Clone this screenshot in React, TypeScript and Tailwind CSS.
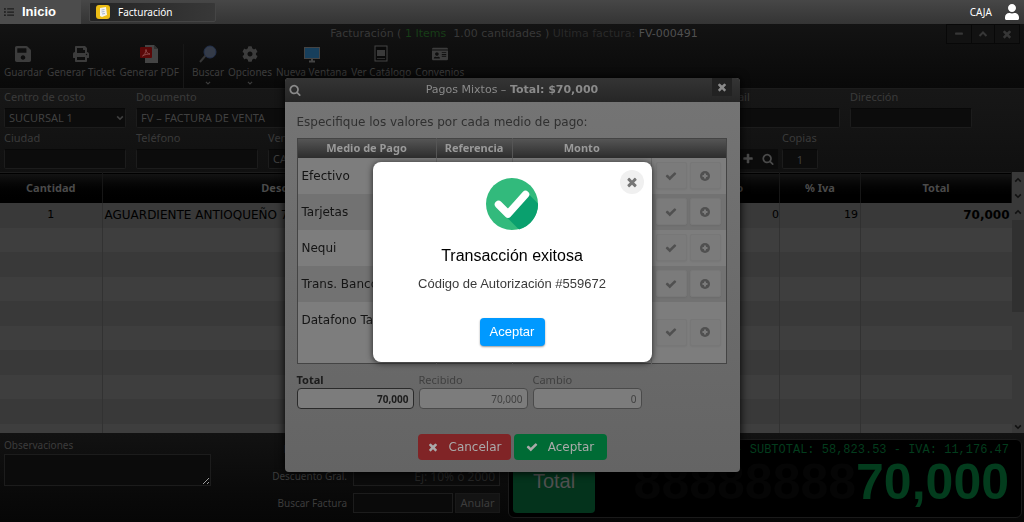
import type { ReactNode } from 'react'
import { FaCog, FaIdCard, FaListUl, FaPrint, FaSave, FaUser } from 'react-icons/fa'

const paths = {
  times:
    'M1490 1322q0 40-28 68l-136 136q-28 28-68 28t-68-28l-294-294-294 294q-28 28-68 28t-68-28l-136-136q-28-28-28-68t28-68l294-294-294-294q-28-28-28-68t28-68l136-136q28-28 68-28t68 28l294 294 294-294q28-28 68-28t68 28l136 136q28 28 28 68t-28 68l-294 294 294 294q28 28 28 68z',
  check:
    'M1671 566q0 40-28 68l-724 724-136 136q-28 28-68 28t-68-28l-136-136-362-362q-28-28-28-68t28-68l136-136q28-28 68-28t68 28l294 295 656-657q28-28 68-28t68 28l136 136q28 28 28 68z',
  plus:
    'M1600 736v192q0 40-28 68t-68 28h-416v416q0 40-28 68t-68 28h-192q-40 0-68-28t-28-68v-416h-416q-40 0-68-28t-28-68v-192q0-40 28-68t68-28h416v-416q0-40 28-68t68-28h192q40 0 68 28t28 68v416h416q40 0 68 28t28 68z',
  minus:
    'M1600 736v192q0 40-28 68t-68 28h-1216q-40 0-68-28t-28-68v-192q0-40 28-68t68-28h1216q40 0 68 28t28 68z',
  search:
    'M1216 832q0-185-131.5-316.5t-316.5-131.5-316.5 131.5-131.5 316.5 131.5 316.5 316.5 131.5 316.5-131.5 131.5-316.5zm512 832q0 52-38 90t-90 38q-54 0-90-38l-343-342q-179 124-399 124-143 0-273.5-55.5t-225-150-150-225-55.5-273.5 55.5-273.5 150-225 225-150 273.5-55.5 273.5 55.5 225 150 150 225 55.5 273.5q0 220-124 399l343 343q37 37 37 90z',
}

function Icon({ name, className }: { name: keyof typeof paths; className: string }) {
  return (
    <svg className={className} viewBox="0 0 1792 1792" fill="currentColor" aria-hidden="true">
      <path d={paths[name]} />
    </svg>
  )
}

function Chevron({ up = false, className }: { up?: boolean; className: string }) {
  return (
    <svg className={className} viewBox="0 0 10 10" fill="none" stroke="currentColor" strokeWidth={2} aria-hidden="true">
      <path d={up ? 'M1.5 7L5 3.5L8.5 7' : 'M1.5 3L5 6.5L8.5 3'} />
    </svg>
  )
}

function PdfIcon() {
  return (
    <svg className="w-5 h-5" viewBox="0 0 20 20" aria-hidden="true">
      <path d="M6 1h9l4 4v14H6z" fill="#444" />
      <path d="M15 1l4 4h-4z" fill="#303030" />
      <rect x="1" y="3" width="12" height="11" rx="1" fill="#5a0808" />
      <path d="M3.5 12c2-1 3.500-4 3.500-6.500 0 2.500 2 4.500 4 4.500-2.500 0-5 .5-7.500 2z" fill="none" stroke="#8d4a4a" />
    </svg>
  )
}

function LensIcon() {
  return (
    <svg className="w-5 h-5" viewBox="0 0 20 20" aria-hidden="true">
      <path d="M2 18l6-7" stroke="#363636" strokeWidth="2" />
      <circle cx="12" cy="8" r="6" fill="#343b48" stroke="#24314c" />
    </svg>
  )
}

function ScreenIcon() {
  return (
    <svg className="w-5 h-5" viewBox="0 0 20 20" aria-hidden="true">
      <rect x="2.500" y="3.500" width="15" height="11" fill="#173f5c" stroke="#444" />
      <path d="M7 17.500h6M10 15v2" stroke="#444" strokeWidth="2" />
    </svg>
  )
}

function CatalogIcon() {
  return (
    <svg className="w-5 h-5" viewBox="0 0 20 20" aria-hidden="true">
      <rect x="4" y="2" width="12" height="15" fill="#0a0a0a" stroke="#444" />
      <rect x="6" y="6" width="8" height="6" fill="#3a3a3a" />
      <path d="M6 14.500h8" stroke="#2c2c2c" />
    </svg>
  )
}

const tools: { label: string; icon: ReactNode; menu?: boolean; divider?: boolean }[] = [
  { label: 'Guardar', icon: <FaSave className="w-4 h-5" /> },
  { label: 'Generar Ticket', icon: <FaPrint className="w-4 h-5" /> },
  { label: 'Generar PDF', icon: <PdfIcon />, divider: true },
  { label: 'Buscar', icon: <LensIcon />, menu: true },
  { label: 'Opciones', icon: <FaCog className="w-4 h-5" />, menu: true },
  { label: 'Nueva Ventana', icon: <ScreenIcon /> },
  { label: 'Ver Catálogo', icon: <CatalogIcon /> },
  { label: 'Convenios', icon: <FaIdCard className="w-4 h-5" /> },
]

const methods = ['Efectivo', 'Tarjetas', 'Nequi', 'Trans. Bancolombia', 'Datafono Tarjeta']

const fieldLabel = 'block h-[19px] text-[11px] leading-4 text-[#3a3a3a]'
const fieldBox =
  'block h-5 w-full rounded-xs border border-[#1c1c1c] border-t-[#080808] bg-[#0c0c0c] px-1 text-[11px] text-[#404040]'

function Field({ id, label, value = '', options = false, className }: {
  id: string
  label: string
  value?: string
  options?: boolean
  className: string
}) {
  return (
    <div className={className}>
      <label htmlFor={id} className={fieldLabel}>
        {label}
      </label>
      {options ? (
        <div className="relative">
          <select id={id} className={`${fieldBox} appearance-none`}>
            <option>{value}</option>
          </select>
          <Chevron className="pointer-events-none absolute right-0.5 top-1.5 h-2 w-2 text-[#404040]" />
        </div>
      ) : (
        <input id={id} defaultValue={value} className={fieldBox} />
      )}
    </div>
  )
}

function TopBar() {
  return (
    <header className="flex h-6 items-center bg-linear-to-b from-[#474747] to-[#343434] text-white">
      <button className="flex h-full w-[81px] items-center gap-2 bg-[#4c4c4c] pl-1 font-['Liberation_Sans',sans-serif] text-[13px] font-bold">
        <FaListUl className="h-2.5 w-2.5 text-[#1c1c1c]" />
        Inicio
      </button>
      <button className="ml-2 flex h-5 w-[127px] items-center gap-2 rounded-xs border border-[#454545] bg-linear-to-r from-[#242424] to-[#383838] pl-1.5 text-[10px]">
        <svg className="h-3.5 w-3.5" viewBox="0 0 14 14" aria-hidden="true">
          <rect width="14" height="14" rx="3" fill="#edbe16" />
          <path d="M4 3l6-1 1 8-5 2-2-1z" fill="#f5f5ef" />
          <path d="M5.500 5l3-.5M5.500 7l3-.5M6 9l3-.5" stroke="#a8b6cf" />
        </svg>
        Facturación
      </button>
      <span className="ml-auto text-[10px]">CAJA</span>
      <FaUser className="ml-3 mr-1 h-4 w-4" />
    </header>
  )
}

function Toolbar() {
  return (
    <section className="bg-linear-to-b from-[#131313] to-[#090909]">
      <div className="flex h-5 items-start">
        <h1 className="flex-1 font-['DejaVu_Sans',sans-serif] pl-1 text-center text-[11px] leading-5 whitespace-pre text-[#383838]">
          Facturación ( <span className="text-[#173d17]">1 Items</span>  1.00 cantidades ) <span className="text-[#292929]">Ultima factura:</span> <span className="text-[#505050]">FV-000491</span>
        </h1>
        <div className="absolute right-1 flex border border-[#080808] bg-[#121212] text-[#363636]">
          <button aria-label="Minimizar" className="flex h-[18px] w-6 items-center justify-center"><Icon name="minus" className="h-2.5 w-2.5" /></button>
          <button aria-label="Maximizar" className="flex h-[18px] w-6 items-center justify-center border-x border-[#080808]"><Chevron up className="h-2.5 w-2.5" /></button>
          <button aria-label="Cerrar ventana" className="flex h-[18px] w-6 items-center justify-center"><Icon name="times" className="h-3 w-3" /></button>
        </div>
      </div>
      <nav className="flex h-11 gap-1 pl-1">
        {tools.map((tool) => (
          <button
            key={tool.label}
            className={`flex flex-col items-center text-[10px] whitespace-nowrap text-[#3c3c3c] ${tool.divider ? 'mr-1 border-r border-[#171717] pr-1' : ''}`}
          >
            {tool.icon}
            <span className="leading-4">{tool.label}</span>
            {tool.menu && <Chevron className="h-1.5 w-1.5" />}
          </button>
        ))}
      </nav>
    </section>
  )
}

function InvoiceForm() {
  return (
    <section className="flex h-[84px] flex-col border-t border-[#1c1c1c] bg-linear-to-b from-[#171717] to-[#101010] pl-1">
      <div className="flex h-[41px] gap-2.5">
        <Field id="centro" label="Centro de costo" value="SUCURSAL 1" options className="w-[122px] shrink-0" />
        <Field id="documento" label="Documento" value="FV – FACTURA DE VENTA" options className="w-[166px] shrink-0" />
        <Field id="cliente" label="Cliente" className="w-[396px] shrink-0" />
        <Field id="email" label="E-mail" className="w-[122px] shrink-0" />
        <Field id="direccion" label="Dirección" className="w-[122px] shrink-0" />
      </div>
      <div className="flex gap-2.5">
        <Field id="ciudad" label="Ciudad" className="w-[122px] shrink-0" />
        <Field id="telefono" label="Teléfono" className="w-[122px] shrink-0" />
        <Field id="vendedor" label="Vendedor" value="CAJA" options className="w-[122px] shrink-0" />
        <Field id="producto" label="Producto" className="w-[328px] shrink-0" />
        <div className="mt-[19px] flex h-5 bg-[#0b0b0b] text-[#4a4a4a]">
          <button aria-label="Agregar producto" className="flex w-5 items-center justify-center"><Icon name="plus" className="h-3 w-3" /></button>
          <button aria-label="Buscar producto" className="flex w-5 items-center justify-center"><Icon name="search" className="h-3 w-3" /></button>
        </div>
        <div className="-ml-1.5 w-9">
          <label htmlFor="copias" className={fieldLabel}>Copias</label>
          <input id="copias" defaultValue="1" className={`${fieldBox} text-center`} />
        </div>
      </div>
    </section>
  )
}

const headCell = 'border-r border-[#161616] text-[11px] font-bold text-[#4a4a4a]'

function InvoiceTable() {
  return (
    <section className="flex min-h-0 flex-1 overflow-hidden bg-[#3c3c3c]">
      <div className="flex-1">
        <table className="w-full table-fixed border-collapse text-[12px] text-black">
          <colgroup>
            <col className="w-[102px]" />
            <col />
            <col className="w-[164px]" />
            <col className="w-[131px]" />
            <col className="w-[81px]" />
            <col className="w-[151px]" />
          </colgroup>
          <thead>
            <tr className="h-[30px] border-t border-[#1c1c1c] bg-linear-to-b from-[#131313] to-black">
              <th className={headCell}>Cantidad</th>
              <th className={headCell}>Descripción</th>
              <th className={headCell}>Precio</th>
              <th className={headCell}>Descuento</th>
              <th className={headCell}>% Iva</th>
              <th className={headCell}>Total</th>
            </tr>
          </thead>
          <tbody className="font-['DejaVu_Sans',sans-serif]">
            <tr className="h-[25px] bg-[#393939]">
              <td className="border-r border-[#303030] text-center text-[11px]">1</td>
              <td className="border-r border-[#303030] pl-0.5">AGUARDIENTE ANTIOQUEÑO 750</td>
              <td className="border-r border-[#303030] pr-0.5 text-right">70,000</td>
              <td className="border-r border-[#303030] text-right text-[11px]">0</td>
              <td className="border-r border-[#303030] pr-0.5 text-right text-[11px]">19</td>
              <td className="pr-0.5 text-right font-bold">70,000</td>
            </tr>
            {Array.from({ length: 9 }, (_, row) => (
              <tr key={row} className="h-6 odd:h-[25px] odd:bg-[#393939] even:bg-[#3e3e3e]">
                {Array.from({ length: 6 }, (_, cell) => (
                  <td key={cell} className="border-r border-[#323232] last:border-r-0" />
                ))}
              </tr>
            ))}
          </tbody>
        </table>
      </div>
      <div className="flex w-3 flex-col items-center bg-[#393939] text-[#111]">
        <Chevron up className="my-1 h-2 w-2 shrink-0" />
        <Chevron className="my-1 h-2 w-2 shrink-0" />
        <Chevron up className="mt-1 mb-1 h-2 w-2 shrink-0" />
        <div className="h-[92px] w-full shrink-0 bg-[#303030]" />
        <Chevron className="mt-auto mb-0.5 h-2 w-2 shrink-0" />
      </div>
    </section>
  )
}

const footerBox = 'h-5 w-full min-w-0 border border-[#1c1c1c] bg-[#0b0b0b] pr-1 text-right text-[12px] placeholder:text-[#242424]'

function Footer() {
  return (
    <footer className="flex h-[89px] bg-linear-to-b from-[#121212] to-[#060606] text-[10px] text-[#3c3c3c]">
      <div className="w-[211px] pl-1 pt-1">
        <label htmlFor="observaciones" className="block h-[17px] leading-4">Observaciones</label>
        <textarea id="observaciones" className="block h-8 w-full scheme-dark border border-[#1c1c1c] bg-[#0b0b0b]" />
      </div>
      <div className="grid w-[289px] grid-cols-[136px_1fr] content-start items-center gap-x-1.5 gap-y-[7px] pt-1.5">
        <label htmlFor="recargo" className="text-right">Recargo Gral.</label>
        <input id="recargo" className={footerBox} />
        <label htmlFor="descuento" className="text-right">Descuento Gral.</label>
        <input id="descuento" placeholder="Ej: 10% ó 2000" className={footerBox} />
        <label htmlFor="factura" className="text-right">Buscar Factura</label>
        <div className="flex gap-0.5">
          <input id="factura" className="h-5 w-0 flex-1 border border-[#1c1c1c] bg-[#0a0a0a]" />
          <button className="h-5 w-[45px] border border-[#181818] bg-[#131313] text-[11px] leading-4">Anular</button>
        </div>
      </div>
      <div className="mt-1.5 mr-0.5 mb-1 ml-2 flex flex-1 rounded-md border border-[#1a1a1a] bg-black p-1">
        <button className="mt-5 w-[82px] shrink-0 rounded-sm bg-[#04331c] pb-4 font-['Liberation_Sans',sans-serif] text-[20px] leading-5 text-[#505050]">
          Total
        </button>
        <div className="flex flex-1 flex-col items-end pr-2 text-[#033c1d]">
          <p className="font-['Liberation_Mono',monospace] text-[12px] leading-3 whitespace-pre">
            - SUBTOTAL: 58,823.53 - IVA: 11,176.47
          </p>
          <p className="flex h-[52px] items-center font-['Liberation_Sans',sans-serif] text-[50px] leading-[52px] font-bold">
            <span aria-hidden="true" className="text-[#050505]">88888888</span>
            70,000
          </p>
        </div>
      </div>
    </footer>
  )
}

const payButton =
  'flex h-[27px] w-[31px] items-center justify-center rounded-xs border border-[#777] bg-[#7b7b7b] text-[#505050] shadow-xs'
const amountBox = 'block h-[21px] w-full rounded-sm border bg-[#7c7c7c] px-1 text-right text-[10px]'

function PaymentModal() {
  return (
    <div role="dialog" aria-label="Pagos Mixtos" className="w-[455px] rounded-sm bg-linear-to-b from-[#757575] to-[#646464] shadow-[0_0_10px_#000]">
      <div className="flex h-6 items-center rounded-t-sm bg-linear-to-b from-[#343434] to-[#262626] pl-1 pr-2 text-[#8a8a8a]">
        <div className="w-6">
          <Icon name="search" className="h-3 w-3" />
        </div>
        <h2 className="flex-1 text-center font-['DejaVu_Sans',sans-serif] text-[11px]">
          Pagos Mixtos – <b>Total: $70,000</b>
        </h2>
        <button aria-label="Cerrar pagos" className="flex h-[18px] w-5 items-center justify-center self-start bg-[#222]">
          <Icon name="times" className="h-3 w-3" />
        </button>
      </div>
      <div className="px-3 pb-3">
        <p className="pt-3 pb-2 font-['DejaVu_Sans',sans-serif] text-[12px] leading-4 text-[#303030]">
          Especifique los valores por cada medio de pago:
        </p>
        <table className="w-[430px] table-fixed border-collapse border border-[#444] bg-[#7d7d7d] text-[12px] text-[#141414]">
          <colgroup>
            <col className="w-[139px]" />
            <col className="w-[76px]" />
            <col className="w-[139px]" />
            <col />
          </colgroup>
          <thead>
            <tr className="h-[19px] bg-linear-to-b from-[#555] to-[#2d2d2d] text-[11px] leading-4 text-[#9a9a9a]">
              <th className="border-r border-[#555]">Medio de Pago</th>
              <th className="border-r border-[#555]">Referencia</th>
              <th>Monto</th>
              <th />
            </tr>
          </thead>
          <tbody className="font-['DejaVu_Sans',sans-serif]">
            {methods.map((method) => (
              <tr key={method} className="h-9 even:bg-[#727272] last:h-[62px]">
                <td className="border-r border-[#6a6a6a] pl-1 pt-2.5 align-top leading-4 whitespace-nowrap">{method}</td>
                <td className="border-r border-[#6a6a6a]" />
                <td className="border-r border-[#6a6a6a]" />
                <td className="pl-1">
                  <div className="flex gap-[3px]">
                    <button aria-label={`Confirmar ${method}`} className={payButton}><Icon name="check" className="h-3 w-3" /></button>
                    <button aria-label={`Agregar ${method}`} className={payButton}>
                      <svg className="h-3 w-3" viewBox="0 0 12 12" aria-hidden="true">
                        <circle cx="6" cy="6" r="5" fill="currentColor" />
                        <path d="M6 3.500v5M3.500 6h5" stroke="#7b7b7b" strokeWidth="2" />
                      </svg>
                    </button>
                  </div>
                </td>
              </tr>
            ))}
          </tbody>
        </table>
        <div className="mt-2 flex gap-[5px] text-[11px] text-[#404040]">
          <div className="w-[117px]">
            <label htmlFor="total" className="block leading-4 font-bold text-[#1c1c1c]">Total</label>
            <input id="total" readOnly value="70,000" className={`${amountBox} border-[#2a2a2a] font-bold text-[#1c1c1c]`} />
          </div>
          <div className="w-[109px]">
            <label htmlFor="recibido" className="block leading-4">Recibido</label>
            <input id="recibido" readOnly value="70,000" className={`${amountBox} border-[#4a4a4a]`} />
          </div>
          <div className="w-[109px]">
            <label htmlFor="cambio" className="block leading-4">Cambio</label>
            <input id="cambio" readOnly value="0" className={`${amountBox} border-[#4a4a4a]`} />
          </div>
        </div>
        <div className="mt-[25px] flex justify-center gap-[3px] font-['DejaVu_Sans',sans-serif] text-[12px] text-[#aaa]">
          <button className="flex h-[26px] w-[93px] items-center justify-center gap-2.5 rounded-sm bg-[#802426]">
            <Icon name="times" className="h-3 w-3" />
            Cancelar
          </button>
          <button className="flex h-[26px] w-[93px] items-center justify-center gap-2.5 rounded-sm bg-[#006b35]">
            <Icon name="check" className="h-3 w-3" />
            Aceptar
          </button>
        </div>
      </div>
    </div>
  )
}

function SuccessDialog() {
  return (
    <div role="alertdialog" aria-label="Transacción exitosa" className="relative flex w-[279px] flex-col items-center rounded-lg bg-white px-4 py-4 font-['Liberation_Sans',sans-serif] shadow-[0_1px_6px_#222]">
      <button aria-label="Cerrar" className="absolute right-2 top-2 flex h-6 w-6 items-center justify-center rounded-full bg-[#f0f0f0] text-[#777]">
        <Icon name="times" className="h-3.5 w-3.5" />
      </button>
      <svg className="h-[52px] w-[52px]" viewBox="0 0 52 52" aria-hidden="true">
        <circle cx="26" cy="26" r="26" fill="#32ba7c" />
        <path d="M20.500 39l12.500 12.500A26 26 0 0 0 52 25.500L41 14.500z" fill="#0aa06e" />
        <path d="M12.500 26.500l9.500 9.500L39.500 16.500" fill="none" stroke="#fff" strokeWidth="7.500" strokeLinecap="round" strokeLinejoin="round" />
      </svg>
      <h2 className="mt-3.5 text-[16px] leading-6 text-black">Transacción exitosa</h2>
      <p className="mt-1 text-[13px] leading-6 text-[#3a3a3a]">Código de Autorización #559672</p>
      <button className="mt-[22px] h-7 w-[65px] rounded-sm bg-[#0099ff] text-[13px] text-white shadow-[0_1px_2px_#999]">
        Aceptar
      </button>
    </div>
  )
}

export default function App() {
  return (
    <div className="flex h-screen flex-col bg-black font-['Noto_Sans',sans-serif]">
      <TopBar />
      <Toolbar />
      <InvoiceForm />
      <InvoiceTable />
      <Footer />
      <div className="fixed inset-0 flex items-start justify-center pt-[78px]">
        <PaymentModal />
      </div>
      <div className="fixed inset-0 flex items-center justify-center pt-0.5">
        <SuccessDialog />
      </div>
    </div>
  )
}
